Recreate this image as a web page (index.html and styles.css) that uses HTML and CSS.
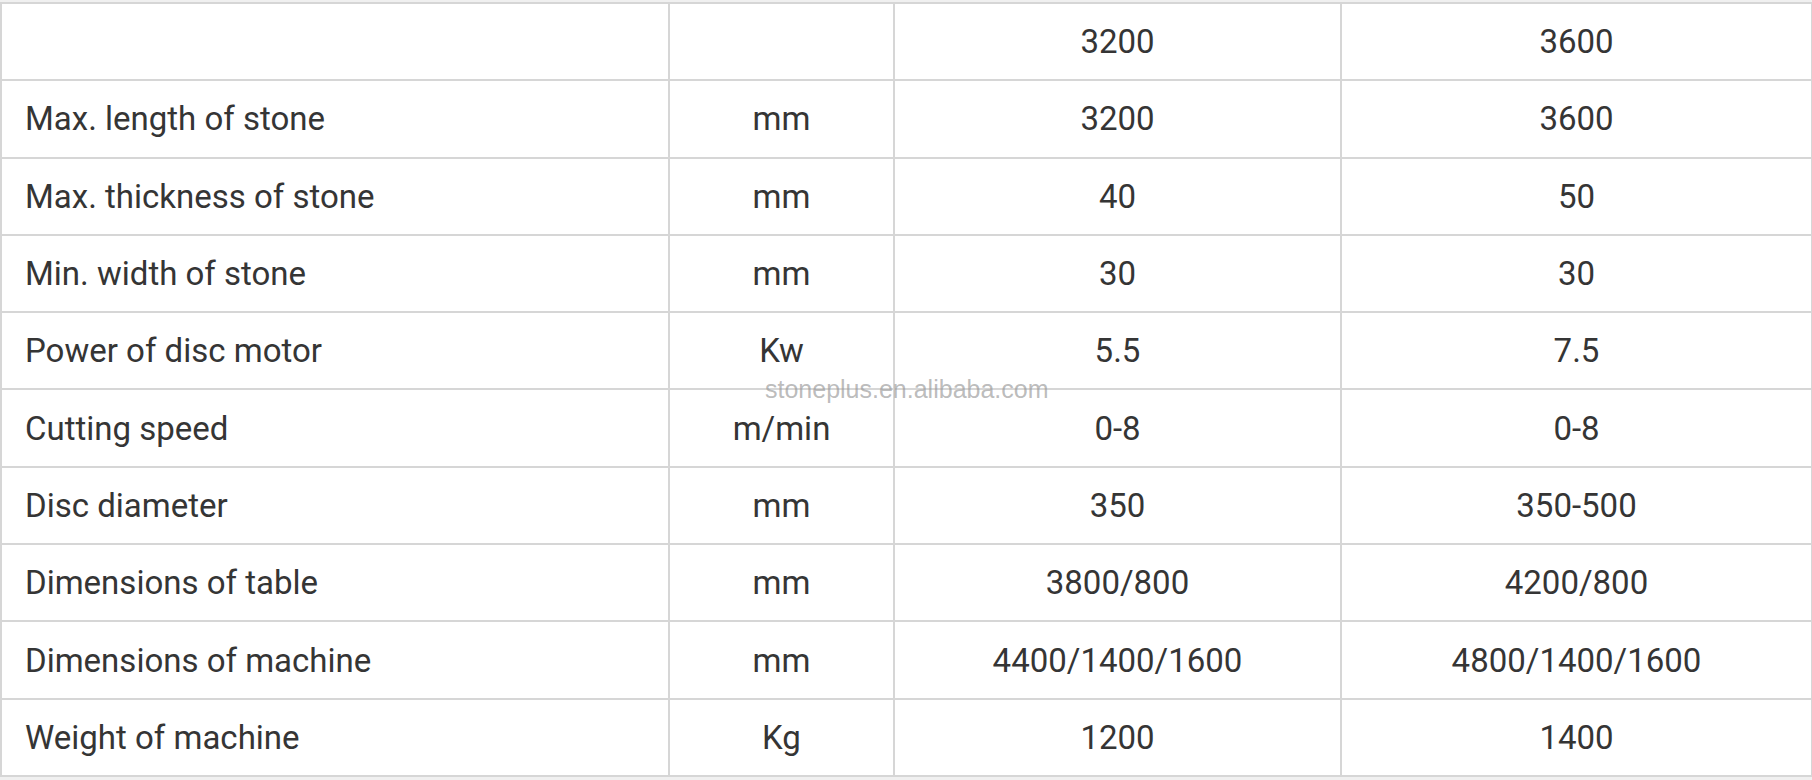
FILE: index.html
```html
<!DOCTYPE html>
<html>
<head>
<meta charset="utf-8">
<link rel="stylesheet" href="styles.css">
</head>
<body>
<div class="wrap">
<table class="spec">
  <colgroup>
    <col class="c1"><col class="c2"><col class="c3"><col class="c4">
  </colgroup>
  <tr><td></td><td class="ctr"></td><td class="ctr">3200</td><td class="ctr">3600</td></tr>
  <tr><td>Max. length of stone</td><td class="ctr">mm</td><td class="ctr">3200</td><td class="ctr">3600</td></tr>
  <tr><td>Max. thickness of stone</td><td class="ctr">mm</td><td class="ctr">40</td><td class="ctr">50</td></tr>
  <tr><td>Min. width of stone</td><td class="ctr">mm</td><td class="ctr">30</td><td class="ctr">30</td></tr>
  <tr><td>Power of disc motor</td><td class="ctr">Kw</td><td class="ctr">5.5</td><td class="ctr">7.5</td></tr>
  <tr><td>Cutting speed</td><td class="ctr">m/min</td><td class="ctr">0-8</td><td class="ctr">0-8</td></tr>
  <tr><td>Disc diameter</td><td class="ctr">mm</td><td class="ctr">350</td><td class="ctr">350-500</td></tr>
  <tr><td>Dimensions of table</td><td class="ctr">mm</td><td class="ctr">3800/800</td><td class="ctr">4200/800</td></tr>
  <tr><td>Dimensions of machine</td><td class="ctr">mm</td><td class="ctr">4400/1400/1600</td><td class="ctr">4800/1400/1600</td></tr>
  <tr><td>Weight of machine</td><td class="ctr">Kg</td><td class="ctr">1200</td><td class="ctr">1400</td></tr>
</table>
<div class="watermark">stoneplus.en.alibaba.com</div>
</div>
</body>
</html>
```

FILE: styles.css
```css
html, body {
  margin: 0;
  padding: 0;
  background: #f0f0f0;
}
body {
  width: 1812px;
  height: 780px;
  overflow: hidden;
}
.wrap {
  position: relative;
  width: 1811px;
  padding-top: 2px;
}
.spec {
  width: 1811px;
  border-collapse: collapse;
  table-layout: fixed;
  background: #fff;
  font-family: Roboto, "Liberation Sans", sans-serif;
  font-size: 33px;
  color: #353535;
}
.c1 { width: 668px; }
.c2 { width: 225px; }
.c3 { width: 447px; }
.c4 { width: 471px; }
.spec tr {
  height: 77.3px;
}
.spec td {
  border: 2px solid #d6d6d6;
  padding: 0 0 0 23px;
  white-space: nowrap;
  vertical-align: middle;
}
.spec td.ctr {
  text-align: center;
  padding: 0;
}
.watermark {
  position: absolute;
  left: 765px;
  top: 375px;
  font-family: "Liberation Sans", Arial, sans-serif;
  font-size: 25px;
  color: rgba(150, 150, 150, 0.65);
  white-space: nowrap;
}
```
